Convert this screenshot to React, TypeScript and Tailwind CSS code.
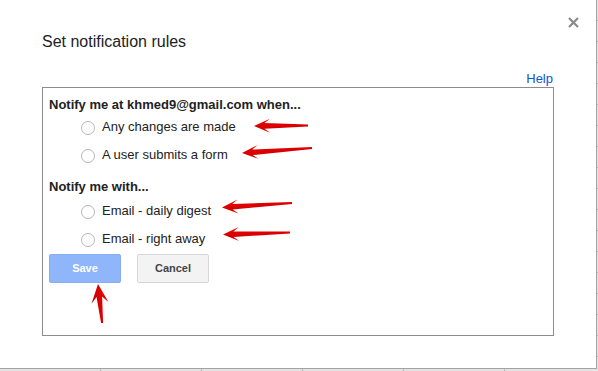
import React from 'react';

type Pt = [number, number];

// red annotation arrows, tip first then tail
const arrows: { tip: Pt; tail: Pt; head: number }[] = [
  { tip: [254, 126], tail: [308, 125.5], head: 14 },
  { tip: [242, 153], tail: [312, 148], head: 14 },
  { tip: [222, 207.5], tail: [292, 203], head: 14 },
  { tip: [223, 234.5], tail: [290, 232.5], head: 14 },
  { tip: [98, 284], tail: [102, 323], head: 17 },
];

const Arrow = ({ tip, tail, head }: { tip: Pt; tail: Pt; head: number }) => {
  const dx = tail[0] - tip[0];
  const dy = tail[1] - tip[1];
  const len = Math.sqrt(dx * dx + dy * dy);
  const angle = (Math.atan2(dy, dx) * 180) / Math.PI;
  const h = head / 2;
  const pts = [
    [0, 0],
    [head + 2, -h],
    [head * 0.75, -2.8],
    [len, -1.1],
    [len, 0.9],
    [head * 0.75, 2.8],
    [head + 2, h],
  ]
    .map((p) => p.join(','))
    .join(' ');
  return (
    <g transform={`translate(${tip[0]} ${tip[1]}) rotate(${angle})`}>
      <polygon points={pts} fill="url(#redfill)" />
    </g>
  );
};

const Radio = ({ label }: { label: string }) => (
  <label className="flex h-[28px] items-center pl-[32px]">
    <span className="mt-[2px] h-[14px] w-[14px] rounded-full border border-[#b4b4b4] bg-white" />
    <span className="ml-[7px] text-[13px] text-[#222]">{label}</span>
  </label>
);

export default function App() {
  return (
    <div
      className="relative flex h-[371px] w-[598px] flex-col overflow-hidden bg-white"
      style={{ fontFamily: '"Liberation Sans", Arial, sans-serif' }}
    >
      <div className="flex h-[369px]">
        {/* dialog */}
        <div className="flex w-[597px] flex-col border-r border-b border-[#a3a3a3] bg-white pl-[42px]">
          <div className="flex h-[32px] items-end justify-end pr-[17px]">
            <svg width="11" height="11" viewBox="0 0 11 11" className="mb-[4px]">
              <path d="M1 1 L10 10 M10 1 L1 10" stroke="#8a8a8a" strokeWidth="2.2" />
            </svg>
          </div>
          <h1 className="text-[16px] leading-[19px] font-normal text-[#222]">Set notification rules</h1>
          <div className="mt-[20px] flex w-[511px] justify-end">
            <a className="text-[13px] leading-[16px] text-[#15c]">Help</a>
          </div>
          <div className="mt-[0px] flex h-[249px] w-[512px] flex-col border border-[#8c8c8c] pt-[9px] pl-[6px]">
            <div className="text-[13px] leading-[16px] font-bold text-[#222]">
              Notify me at khmed9@gmail.com when...
            </div>
            <Radio label="Any changes are made" />
            <Radio label="A user submits a form" />
            <div className="mt-[10px] text-[13px] leading-[16px] font-bold text-[#222]">Notify me with...</div>
            <div className="mt-[2px]" />
            <Radio label="Email - daily digest" />
            <Radio label="Email - right away" />
            <div className="mt-[1px] flex gap-[16px]">
              <button className="h-[29px] w-[72px] rounded-[2px] border border-[#86aef5] bg-[#8fb5fb] text-[11px] font-bold text-white">
                Save
              </button>
              <button className="h-[29px] w-[72px] rounded-[2px] border border-[#d6d6d6] bg-[#f3f3f3] text-[11px] font-bold text-[#444]">
                Cancel
              </button>
            </div>
          </div>
        </div>
        {/* sheet edge on the right */}
        <div className="flex w-[1px] flex-col bg-[#e4e4e4]">
          {Array.from({ length: 18 }).map((_, i) => (
            <div key={i} className="h-[21px] shrink-0 border-b border-[#b8b8b8]" />
          ))}
        </div>
      </div>
      {/* sheet edge at the bottom */}
      <div className="flex h-[2px] bg-[#e4e4e4]">
        {Array.from({ length: 6 }).map((_, i) => (
          <div key={i} className="h-full w-[101px] shrink-0 border-r border-[#b8b8b8]" />
        ))}
      </div>

      <svg className="pointer-events-none absolute inset-0" width="598" height="371">
        <defs>
          <linearGradient id="redfill" x1="0" y1="0" x2="0" y2="1">
            <stop offset="0" stopColor="#f20000" />
            <stop offset="1" stopColor="#c40000" />
          </linearGradient>
        </defs>
        {arrows.map((a, i) => (
          <Arrow key={i} {...a} />
        ))}
      </svg>
    </div>
  );
}
